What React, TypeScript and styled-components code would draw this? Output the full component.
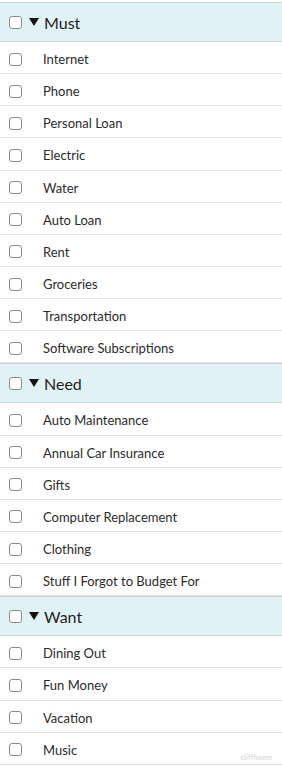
import React from "react";
import styled, { createGlobalStyle } from "styled-components";

const GlobalStyle = createGlobalStyle`
  html, body {
    margin: 0;
    padding: 0;
    background: #fff;
  }
  body {
    font-family: Lato, "Noto Sans", "Liberation Sans", sans-serif;
    color: #2b2b2b;
  }
`;

const ROW_H = "32.15px";

const Page = styled.div`
  position: relative;
  width: 282px;
  padding-top: 2px;
`;

const GroupHeader = styled.div`
  box-sizing: border-box;
  height: 40px;
  display: flex;
  align-items: center;
  padding-left: 9px;
  background: #e1f2f7;
  border-top: 1px solid #ccd6da;
  border-bottom: 1px solid #ccd6da;
  font-size: 16px;
  color: #1e1e1e;
`;

const Caret = styled.svg`
  width: 10px;
  height: 8px;
  margin: 0 5px 0 7px;
  flex: none;
`;

const Row = styled.div`
  box-sizing: border-box;
  height: ${ROW_H};
  display: flex;
  align-items: center;
  padding-left: 9px;
  padding-top: 3px;
  border-bottom: 1px solid #e3e3e3;
  font-size: 13px;
  color: #2b2b2b;
`;

const Box = styled.span<{ $header?: boolean }>`
  box-sizing: border-box;
  width: 13px;
  height: 13px;
  flex: none;
  border: 1px solid #8c8c8c;
  border-radius: 3px;
  background: #fff;
  margin-right: ${(p) => (p.$header ? "0" : "21px")};
`;

const Watermark = styled.span`
  position: absolute;
  right: 10px;
  bottom: 4px;
  font-size: 7px;
  color: #cfcfcf;
  letter-spacing: 0.3px;
`;

const groups: { name: string; items: string[] }[] = [
  {
    name: "Must",
    items: [
      "Internet",
      "Phone",
      "Personal Loan",
      "Electric",
      "Water",
      "Auto Loan",
      "Rent",
      "Groceries",
      "Transportation",
      "Software Subscriptions",
    ],
  },
  {
    name: "Need",
    items: [
      "Auto Maintenance",
      "Annual Car Insurance",
      "Gifts",
      "Computer Replacement",
      "Clothing",
      "Stuff I Forgot to Budget For",
    ],
  },
  {
    name: "Want",
    items: ["Dining Out", "Fun Money", "Vacation", "Music"],
  },
];

const App: React.FC = () => {
  return (
    <>
      <GlobalStyle />
      <Page>
        {groups.map((g) => (
          <div key={g.name}>
            <GroupHeader>
              <Box $header />
              <Caret viewBox="0 0 10 8">
                <polygon points="0,0 10,0 5,8" fill="#111" />
              </Caret>
              <span>{g.name}</span>
            </GroupHeader>
            {g.items.map((it) => (
              <Row key={it}>
                <Box />
                <span>{it}</span>
              </Row>
            ))}
          </div>
        ))}
        <Watermark>cliffhoem</Watermark>
      </Page>
    </>
  );
};

export default App;
